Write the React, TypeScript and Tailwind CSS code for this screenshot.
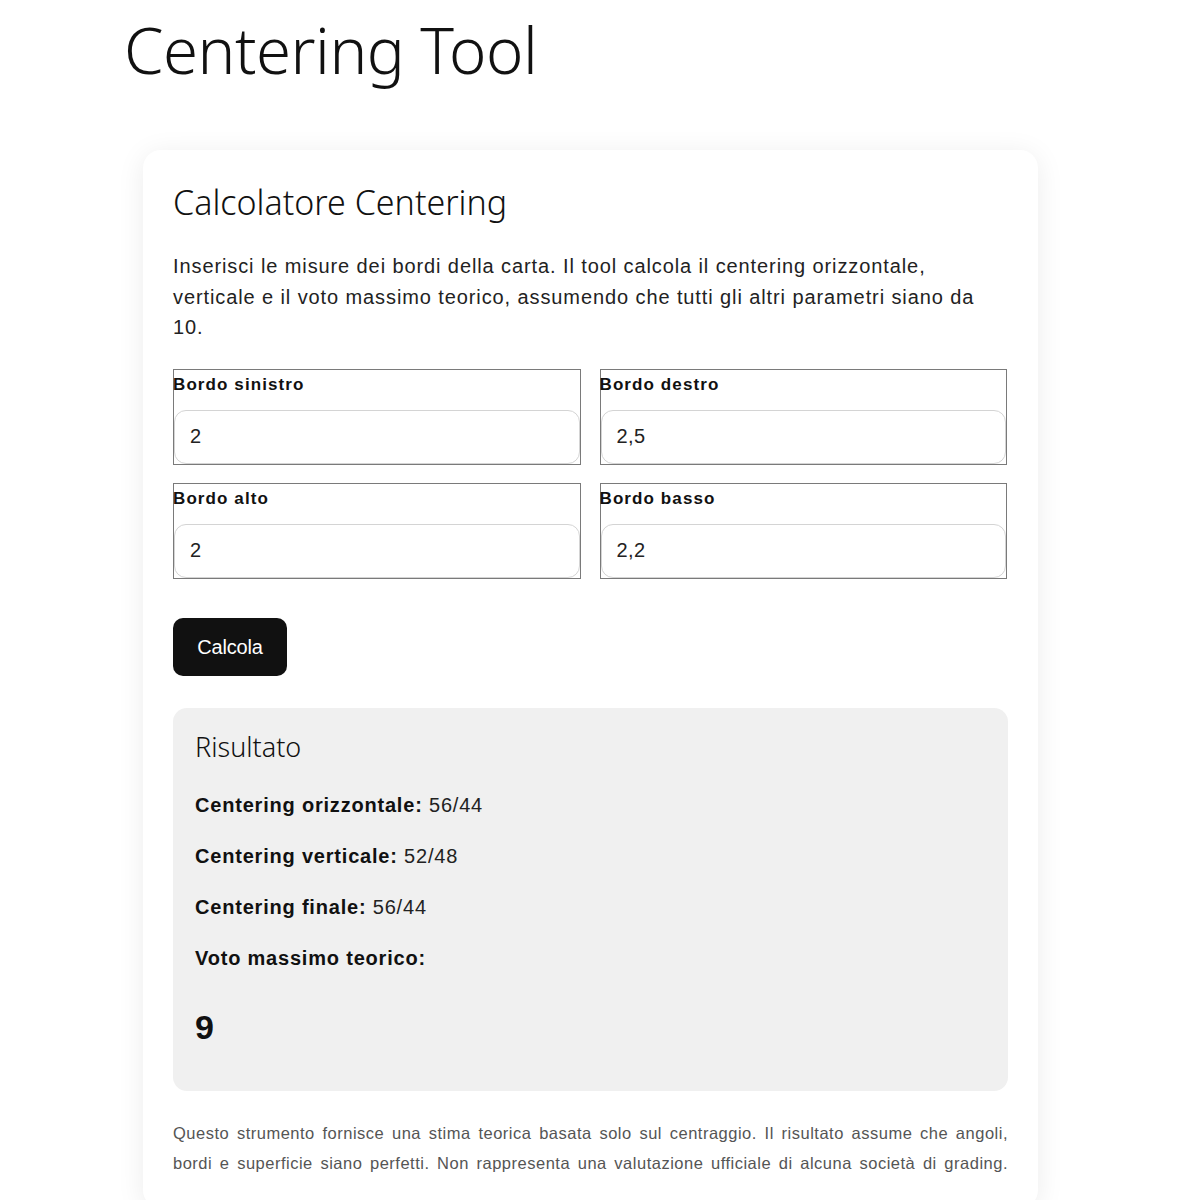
import React, { useState } from 'react';

const fields = [
  { id: 'left', label: 'Bordo sinistro', value: '2' },
  { id: 'right', label: 'Bordo destro', value: '2,5' },
  { id: 'top', label: 'Bordo alto', value: '2' },
  { id: 'bottom', label: 'Bordo basso', value: '2,2' },
];

const Field: React.FC<{ label: string; value: string; onChange: (v: string) => void }> = ({ label, value, onChange }) => (
  <div className="flex flex-col border border-[#7a7a7a] h-[96px]">
    <span className="pt-[2px] text-[17px] font-bold tracking-[1.1px] leading-[28px] text-[#111] -ml-px -mt-px">{label}</span>
    <input
      type="text"
      value={value}
      onChange={(e) => onChange(e.target.value)}
      className="mt-[11px] h-[55px] w-full rounded-[12px] border border-[#d4d4d4] bg-white px-[15px] text-[20px] tracking-[0.4px] text-[#222] outline-none"
    />
  </div>
);

export default function App() {
  const [values, setValues] = useState<Record<string, string>>(
    Object.fromEntries(fields.map((f) => [f.id, f.value]))
  );

  return (
    <div className="min-h-screen bg-white font-['Liberation_Sans',Arial,sans-serif] text-[#111]">
      <div className="pl-[126px] pt-[10px]">
        <h1 className="-ml-[2px] font-['Noto_Sans',sans-serif] text-[63.5px] font-light leading-[80px] tracking-[-0.5px] text-[#111]">
          Centering Tool
        </h1>

        <div className="ml-[17px] mt-[60px] w-[895px] rounded-[18px] bg-white px-[30px] pt-[30px] pb-[30px] shadow-[0_4px_28px_rgba(0,0,0,0.08)]">
          <h2 className="font-['Noto_Sans',sans-serif] text-[34px] font-light leading-[44px] text-[#111]">
            Calcolatore Centering
          </h2>

          <p className="mt-[27px] text-[20px] leading-[30.5px] tracking-[0.9px] text-[#222]">
            Inserisci le misure dei bordi della carta. Il tool calcola il centering orizzontale, verticale e il voto massimo teorico, assumendo che tutti gli altri parametri siano da 10.
          </p>

          <div className="mt-[26px] grid grid-cols-2 gap-x-[19px] gap-y-[18px] pr-[1px]">
            {fields.map((f) => (
              <Field
                key={f.id}
                label={f.label}
                value={values[f.id]}
                onChange={(v) => setValues({ ...values, [f.id]: v })}
              />
            ))}
          </div>

          <button className="mt-[39px] h-[58px] w-[114px] rounded-[10px] bg-[#111] text-[20px] tracking-[-0.2px] text-white">
            Calcola
          </button>

          <div className="mt-[32px] rounded-[14px] bg-[#f0f0f0] px-[22px] pt-[22px] pb-[44px]">
            <h3 className="font-['Noto_Sans',sans-serif] text-[27px] font-light leading-[34px] text-[#111]">
              Risultato
            </h3>
            <div className="mt-[28px] flex flex-col gap-[25px] text-[20px] leading-[26px] tracking-[0.8px] text-[#222]">
              <p><b className="text-[#111]">Centering orizzontale:</b> 56/44</p>
              <p><b className="text-[#111]">Centering verticale:</b> 52/48</p>
              <p><b className="text-[#111]">Centering finale:</b> 56/44</p>
              <p><b className="text-[#111]">Voto massimo teorico:</b></p>
            </div>
            <div className="mt-[36px] text-[34px] font-bold leading-[40px] text-[#111]">9</div>
          </div>

          <p className="mt-[27px] text-justify text-[16.5px] leading-[30px] tracking-[0.5px] text-[#555] [text-align-last:justify]">
            Questo strumento fornisce una stima teorica basata solo sul centraggio. Il risultato assume che angoli,
            <br />
            bordi e superficie siano perfetti. Non rappresenta una valutazione ufficiale di alcuna società di grading.
          </p>
        </div>
      </div>
    </div>
  );
}
